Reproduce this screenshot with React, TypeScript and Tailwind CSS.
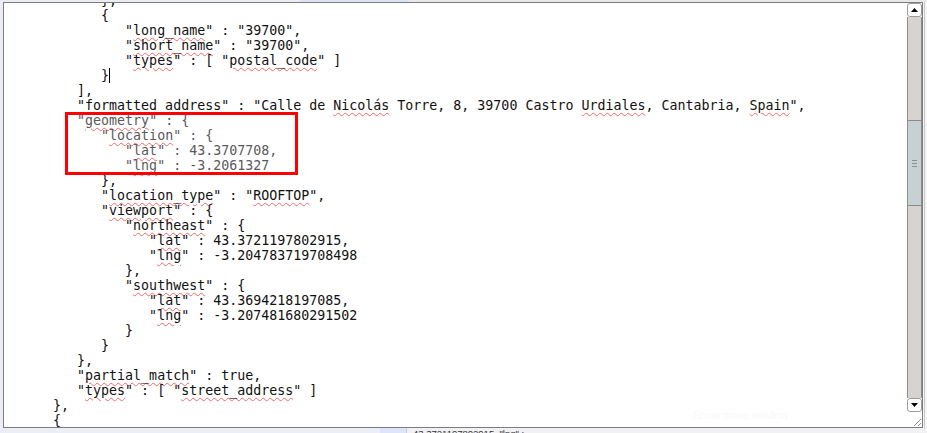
import React from "react";

type Seg = { t: string; err?: boolean };
type Line = { indent: number; segs: Seg[]; dim?: boolean; caret?: boolean };

const w = (t: string): Seg => ({ t, err: true });
const p = (t: string): Seg => ({ t });

const lines: Line[] = [
  { indent: 12, segs: [p("},")] },
  { indent: 12, segs: [p("{")] },
  { indent: 15, segs: [p('"'), w("long_name"), p('" : "39700",')] },
  { indent: 15, segs: [p('"'), w("short_name"), p('" : "39700",')] },
  { indent: 15, segs: [p('"'), w("types"), p('" : [ "'), w("postal_code"), p('" ]')] },
  { indent: 12, segs: [p("}")], caret: true },
  { indent: 9, segs: [p("],")] },
  {
    indent: 9,
    segs: [
      p('"formatted address" : "Calle de '),
      w("Nicolás"),
      p(" Torre, 8, 39700 Castro "),
      w("Urdiales"),
      p(", Cantabria, "),
      w("Spain"),
      p('",'),
    ],
  },
  { indent: 9, dim: true, segs: [p('"'), w("geometry"), p('" : {')] },
  { indent: 12, dim: true, segs: [p('"'), w("location"), p('" : {')] },
  { indent: 15, dim: true, segs: [p('"'), w("lat"), p('" : 43.3707708,')] },
  { indent: 15, dim: true, segs: [p('"'), w("lng"), p('" : -3.2061327')] },
  { indent: 12, segs: [p("},")] },
  { indent: 12, segs: [p('"'), w("location_type"), p('" : "'), w("ROOFTOP"), p('",')] },
  { indent: 12, segs: [p('"'), w("viewport"), p('" : {')] },
  { indent: 15, segs: [p('"'), w("northeast"), p('" : {')] },
  { indent: 18, segs: [p('"'), w("lat"), p('" : 43.3721197802915,')] },
  { indent: 18, segs: [p('"'), w("lng"), p('" : -3.204783719708498')] },
  { indent: 15, segs: [p("},")] },
  { indent: 15, segs: [p('"'), w("southwest"), p('" : {')] },
  { indent: 18, segs: [p('"'), w("lat"), p('" : 43.3694218197085,')] },
  { indent: 18, segs: [p('"'), w("lng"), p('" : -3.207481680291502')] },
  { indent: 15, segs: [p("}")] },
  { indent: 12, segs: [p("}")] },
  { indent: 9, segs: [p("},")] },
  { indent: 9, segs: [p('"'), w("partial_match"), p('" : true,')] },
  { indent: 9, segs: [p('"'), w("types"), p('" : [ "'), w("street_address"), p('" ]')] },
  { indent: 6, segs: [p("},")] },
  { indent: 6, segs: [p("{")] },
];

function ArrowButton({ up }: { up?: boolean }) {
  return (
    <div className="h-[14px] shrink-0 bg-white border border-[#9c9c9c] rounded-[3px] flex items-center justify-center">
      <svg width="7" height="4" viewBox="0 0 7 4">
        <path d={up ? "M0 4 L3.5 0 L7 4 Z" : "M0 0 L7 0 L3.5 4 Z"} fill="#000" />
      </svg>
    </div>
  );
}

function Scrollbar() {
  return (
    <div className="w-[15px] shrink-0 flex flex-col">
      <ArrowButton up />
      <div className="flex-1 bg-[#d6d3d0] border-x border-[#8e8e8e]">
        <div className="mt-[103px] h-[86px] bg-[#c7d0d3] border-y border-[#8a8a8a] flex flex-col items-center justify-center gap-[2px]">
          <div className="w-[5px] h-px bg-[#8a8f92]" />
          <div className="w-[5px] h-px bg-[#8a8f92]" />
          <div className="w-[5px] h-px bg-[#8a8f92]" />
        </div>
      </div>
      <ArrowButton />
      {/* resize grip */}
      <div className="h-[15px] shrink-0 bg-white flex items-end justify-end">
        <svg width="10" height="10" viewBox="0 0 10 10">
          <path d="M9 2 L2 9 M9 6 L6 9" stroke="#8c8c8c" strokeWidth="1" />
        </svg>
      </div>
    </div>
  );
}

export default function App() {
  return (
    <div className="relative w-[927px] h-[433px] overflow-hidden bg-[#eceef7] flex flex-col">
      {/* window behind, top edge */}
      <div className="h-[2px] shrink-0 flex">
        <div className="w-[300px] bg-[#eaecf4]" />
        <div className="w-[109px] bg-[#dce3f6]" />
        <div className="flex-1 bg-[#e9e9ec]" />
      </div>

      <div className="h-[426px] shrink-0 flex">
        <div className="w-[3px] shrink-0" />
        {/* textarea */}
        <div className="w-[920px] shrink-0 border border-[#7c7c7c] bg-white flex">
          <div className="relative flex-1 overflow-hidden">
            <div className="mt-[-10px] pl-[1px] font-['DejaVu_Sans_Mono',monospace] text-[13.3px] leading-[15px] text-[#111]">
              {lines.map((line, i) => (
                <div key={i} className={`whitespace-pre ${line.dim ? "text-[#5a5a5a]" : ""}`}>
                  {" ".repeat(line.indent)}
                  {line.segs.map((s, j) =>
                    s.err ? (
                      <span
                        key={j}
                        className="underline decoration-wavy decoration-[#f06a6a] decoration-[1px] underline-offset-[1.5px]"
                      >
                        {s.t}
                      </span>
                    ) : (
                      <span key={j}>{s.t}</span>
                    )
                  )}
                  {line.caret && <span className="inline-block w-0 h-[15px] align-top border-l border-black" />}
                </div>
              ))}
            </div>
            <span className="absolute left-[689px] top-[404px] font-['Liberation_Sans',sans-serif] text-[11px] text-[#f8f8f8]">
              Show more window
            </span>
          </div>
          <Scrollbar />
        </div>
        <div className="flex-1 bg-[#f6f6f6] flex">
          <div className="ml-[1px] w-px bg-[#c8c8c8]" />
        </div>
      </div>

      {/* window behind, bottom edge */}
      <div className="h-[14px] shrink-0 flex">
        <div className="w-[380px] shrink-0" />
        <div className="w-[27px] shrink-0 bg-[#dfe5f9] border-r border-[#c9cfe0]" />
        <div className="flex-1 bg-[#f1f1f3] pl-[6px] font-['Liberation_Sans',sans-serif] text-[9.5px] leading-[12px] text-[#333]">
          43.3721197802915, "lng" :
        </div>
      </div>

      {/* red annotation box */}
      <div className="absolute left-[65px] top-[112px] w-[233px] h-[63px] border-[3px] border-[#f00]" />
    </div>
  );
}
